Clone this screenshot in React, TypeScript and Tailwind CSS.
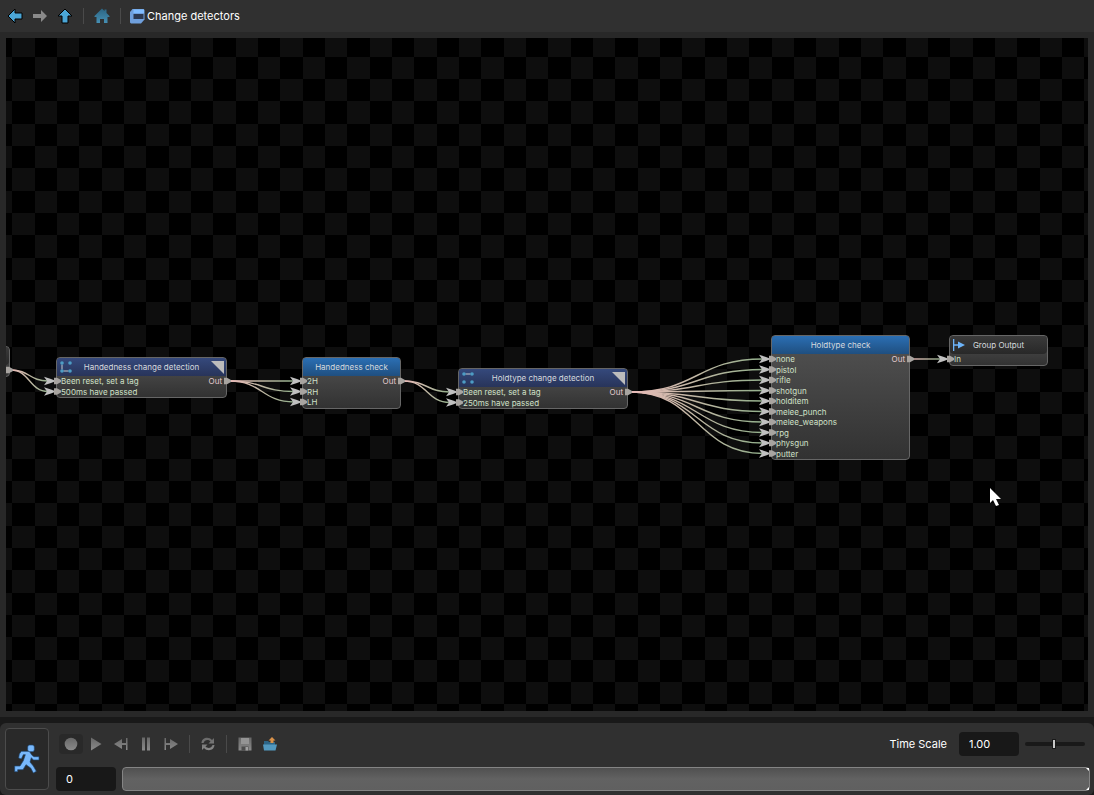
import type { ReactNode } from "react";

const ICON_BTN = "flex h-5 w-6 items-center justify-center rounded-sm";
const FIELD = "h-6 w-[60px] rounded bg-[#181818] px-2.5 text-[11px] text-white outline-none";

type NodeKind = "state" | "check" | "plain";

type GraphNode = {
  id: string;
  title: string;
  kind: NodeKind;
  x: number;
  y: number;
  w: number;
  inputs: string[];
  out: boolean;
  icon?: ReactNode;
};

const LinksIcon = ({ d }: { d: string }) => (
  <svg width="12" height="12" viewBox="0 0 12 12" fill="#4d9cc4">
    <path d={d} stroke="#c4ccd4" fill="none" />
    <circle cx="2" cy="2" r="1.8" />
    <circle cx="10" cy="2" r="1.8" />
    <circle cx="2" cy="10" r="1.8" />
    <circle cx="10" cy="10" r="1.8" />
  </svg>
);

const OutputIcon = () => (
  <svg width="12" height="12" viewBox="0 0 12 12" fill="#6db3f8">
    <path d="M0 0h1.3v12H0zM1 5.2h4v1.6H1z" />
    <path d="M5 2.5 12 6 5 9.5z" />
  </svg>
);

// positions are canvas-relative
const NODES: GraphNode[] = [
  { id: "prev", title: "", kind: "plain", x: -56, y: 308, w: 60, inputs: [""], out: false },
  {
    id: "hand", title: "Handedness change detection", kind: "state", x: 50, y: 319, w: 171, out: true,
    inputs: ["Been reset, set a tag", "500ms have passed"],
    icon: <LinksIcon d="M2 3.5v5M3.5 10h5" />,
  },
  { id: "handCheck", title: "Handedness check", kind: "check", x: 296, y: 319, w: 99, inputs: ["2H", "RH", "LH"], out: true },
  {
    id: "hold", title: "Holdtype change detection", kind: "state", x: 452, y: 330, w: 170, out: true,
    inputs: ["Been reset, set a tag", "250ms have passed"],
    icon: <LinksIcon d="M3.5 2h5" />,
  },
  {
    id: "holdCheck", title: "Holdtype check", kind: "check", x: 765, y: 297, w: 139, out: true,
    inputs: ["none", "pistol", "rifle", "shotgun", "holditem", "melee_punch", "melee_weapons", "rpg", "physgun", "putter"],
  },
  { id: "output", title: "Group Output", kind: "plain", x: 943, y: 297, w: 99, inputs: ["In"], out: false, icon: <OutputIcon /> },
];

const ROW = 10.5;
const portY = (n: GraphNode, i: number) => n.y + 24 + i * ROW;

const LINKS = [["hand", "handCheck"], ["handCheck", "hold"], ["hold", "holdCheck"], ["holdCheck", "output"]];

const byId = (id: string) => NODES.find((n) => n.id === id)!;

const EDGES = [
  ...byId("hand").inputs.map((_, i) => ({ x1: 5, y1: 332, x2: 42, y2: portY(byId("hand"), i) })),
  ...LINKS.flatMap(([from, to]) => {
    const a = byId(from);
    const b = byId(to);
    return b.inputs.map((_, i) => ({ x1: a.x + a.w + 3, y1: portY(a, 0), x2: b.x - 8, y2: portY(b, i) }));
  }),
];

const HEADER: Record<NodeKind, string> = {
  state: "bg-linear-to-b from-[#35497c] to-[#28345a]",
  check: "bg-linear-to-b from-[#2b6fb4] to-[#1f4f80]",
  plain: "rounded-b bg-linear-to-b from-[#3a3a3a] to-[#282828]",
};

function NodeBox({ node }: { node: GraphNode }) {
  return (
    <section
      className="absolute overflow-hidden rounded border border-[#666] bg-linear-to-b from-[#525252] to-[#323232] text-[8px] leading-[10px]"
      style={{ left: node.x, top: node.y, width: node.w }}
    >
      <header className={`relative flex h-[18px] items-center justify-center text-[#d6dade] ${HEADER[node.kind]}`}>
        {node.icon && <span className="absolute left-[3px]">{node.icon}</span>}
        {node.title}
        {node.kind === "state" && (
          <svg className="absolute top-[3px] right-0.5" width="13" height="13" viewBox="0 0 13 13">
            <path d="M0 0h13v13z" fill="#bcbcbc" />
          </svg>
        )}
      </header>
      <div className="flex justify-between">
        <ul className="pl-1 text-[#d0e0c8]">
          {node.inputs.map((name, i) => (
            <li key={i} className={i % 2 ? "h-2.5" : "h-[11px]"}>{name}</li>
          ))}
        </ul>
        {node.out && <span className="h-[11px] pr-1 text-[#e6ccd0]">Out</span>}
      </div>
    </section>
  );
}

function Port({ x, y }: { x: number; y: number }) {
  return <path transform={`translate(${x} ${y})`} d="M-3-3.300h3L4-1V1L0 3.300h-3z" fill="#a8a4a0" />;
}

function Canvas() {
  return (
    <main className="relative min-h-0 flex-1 overflow-hidden bg-black">
      <svg className="absolute inset-0 h-full w-full" shapeRendering="crispEdges">
        <defs>
          <pattern id="checker" x="6" y="19" width="134" height="134" patternUnits="userSpaceOnUse">
            <path
              fill="#0e0e0e"
              d="M23 0h22v22H23zM67 0h23v22H67zM112 0h22v22h-22zM0 22h23v22H0zM45 22h22v22H45zM90 22h22v22H90zM23 44h22v23H23zM67 44h23v23H67zM112 44h22v23h-22zM0 67h23v22H0zM45 67h22v22H45zM90 67h22v22H90zM23 89h22v22H23zM67 89h23v22H67zM112 89h22v22h-22zM0 111h23v23H0zM45 111h22v23H45zM90 111h22v23H90z"
            />
          </pattern>
        </defs>
        <rect width="100%" height="100%" fill="url(#checker)" />
      </svg>

      {NODES.map((n) => <NodeBox key={n.id} node={n} />)}

      <svg className="pointer-events-none absolute inset-0 h-full w-full" fill="none">
        {EDGES.map((e, i) => {
          const mid = (e.x2 - e.x1) / 2;
          return (
            <g key={i}>
              <linearGradient id={`edge${i}`} gradientUnits="userSpaceOnUse" x1={e.x1} x2={e.x2} y1="0" y2="0">
                <stop stopColor="#eabcb9" />
                <stop offset="1" stopColor="#93b08c" />
              </linearGradient>
              <path
                d={`M${e.x1} ${e.y1}C${e.x1 + mid} ${e.y1} ${e.x2 - mid} ${e.y2} ${e.x2} ${e.y2}`}
                stroke={`url(#edge${i})`}
                strokeWidth="1.4"
              />
              <path transform={`translate(${e.x2} ${e.y2})`} d="M-4-4.300 3-2 8 0 3 2-4 4.300-1 0z" fill="#c0c0c0" />
              <Port x={e.x2 + 9} y={e.y2} />
            </g>
          );
        })}
        <Port x={3} y={332} />
        {NODES.filter((n) => n.out).map((n) => <Port key={n.id} x={n.x + n.w} y={portY(n, 0)} />)}
        <path transform="translate(984 450)" d="M0 0v15l3-3 3 6 3-1-3-6h5z" fill="#fff" />
      </svg>
    </main>
  );
}

const ARROW = "M1 8 8 1v4h7v6H8v4z";

function Toolbar() {
  return (
    <nav className="flex h-8 shrink-0 items-center bg-[#303030] px-[7px]">
      <div className="flex gap-[9px]">
        <button aria-label="Back">
          <svg width="16" height="16" viewBox="0 0 16 16">
            <path d={ARROW} fill="#4ba6d6" stroke="#000" />
          </svg>
        </button>
        <button aria-label="Forward">
          <svg width="16" height="16" viewBox="0 0 16 16">
            <path d="M15 8 9 2v4H1v4h8v4z" fill="#8a8a8a" />
          </svg>
        </button>
        <button aria-label="Up">
          <svg width="16" height="16" viewBox="0 0 16 16">
            <path d={ARROW} fill="#4ba6d6" stroke="#000" transform="rotate(90 8 8)" />
          </svg>
        </button>
      </div>
      <span className="mx-2.5 h-4 w-px bg-[#4a4a4a]" />
      <button aria-label="Home">
        <svg width="16" height="16" viewBox="0 0 16 16">
          <linearGradient id="home" x2="0" y2="1">
            <stop stopColor="#2b6482" />
            <stop offset="1" stopColor="#4690b4" />
          </linearGradient>
          <path d="M8 .5 10.5 3V1.500h2V5L15.500 8v1h-2v6H10v-4H6v4H2.500V9h-2V8z" fill="url(#home)" />
        </svg>
      </button>
      <span className="mr-[9px] ml-2.5 h-4 w-px bg-[#4a4a4a]" />
      <a href="#" className="flex items-center gap-0.5 text-[11px] text-white">
        <svg width="15" height="15" viewBox="0 0 15 15">
          <path d="M2.500 0H13.500L14.500 1v9.500L11 14.500H1L0 13.500V3z" fill="#6f9fdc" />
          <path d="M3.500 .5h10.500V4H3.500z" fill="#80bcff" />
          <path d="M3.500 5H13.500V10H3.500z" fill="#2c3850" />
        </svg>
        Change detectors
      </a>
    </nav>
  );
}

function TransportIcon({ children }: { children: ReactNode }) {
  return (
    <svg width="14" height="14" viewBox="0 0 14 14" fill="url(#steel)">
      {children}
    </svg>
  );
}

function Timeline() {
  return (
    <footer className="flex shrink-0 gap-[7px] rounded-md bg-[#303030] pt-[5px] pr-1 pb-[5px] pl-[5px]">
      <svg className="absolute" width="0" height="0">
        <linearGradient id="steel" gradientUnits="userSpaceOnUse" x1="0" y1="0" x2="0" y2="14">
          <stop stopColor="#666" />
          <stop offset="1" stopColor="#8c8c8c" />
        </linearGradient>
      </svg>
      <button aria-label="Animation" className="flex h-[62px] w-11 items-center justify-center rounded border border-[#4c4c4c] bg-[#292929]">
        <svg width="26" height="30" viewBox="0 0 78 90" fill="#78b8fc" stroke="#1d4570" strokeWidth="2">
          <path d="M22 22H46L54 34 60 38H75V48H58L52 41 48 54 58 66 67 82 58 87 50 72 36 62 27 77H11V83H2V66H18L28 50 34 32H28L22 45 14 42 16 30z" />
          <rect x="41" y="3" width="20" height="20" rx="6" />
        </svg>
      </button>

      <div className="-mb-px flex min-w-0 flex-1 flex-col justify-between pt-1">
        <div className="flex items-center">
          <div className="flex items-center gap-px pl-[3px]">
            <button aria-label="Record" className={`${ICON_BTN} bg-[#292929]`}>
              <TransportIcon><circle cx="7" cy="7" r="6.300" /></TransportIcon>
            </button>
            <button aria-label="Play" className={ICON_BTN}>
              <TransportIcon><path d="M2 .5v13L12.500 7z" /></TransportIcon>
            </button>
            <button aria-label="Step back" className={ICON_BTN}>
              <TransportIcon><path d="M0 7l8-5v4h4V1h1.500v12H12V8H8v4z" /></TransportIcon>
            </button>
            <button aria-label="Pause" className={ICON_BTN}>
              <TransportIcon><path d="M3 .5h3v13H3zM8 .5h3v13H8z" /></TransportIcon>
            </button>
            <button aria-label="Step forward" className={ICON_BTN}>
              <TransportIcon><path d="M14 7 6 2v4H2V1H.5v12H2V8h4v4z" /></TransportIcon>
            </button>
            <span className="mx-[5px] h-[18px] w-px bg-[#4a4a4a]" />
            <button aria-label="Loop" className={ICON_BTN}>
              <TransportIcon>
                <path d="M.5 6C1 0 8-.5 11 3l2-2v5.500H7.500L9.500 4.500C7 2 3.500 3 2.500 6zM13.500 8C13 14 6 14.500 3 11l-2 2V7.500h5.500L4.500 9.500C7 12 10.500 11 11.500 8z" />
              </TransportIcon>
            </button>
            <span className="mx-[5px] h-[18px] w-px bg-[#4a4a4a]" />
            <button aria-label="Save" className={ICON_BTN}>
              <TransportIcon>
                <path d="M.5.5h13v13H.500z" />
                <path d="M3 1h8v6H3z" fill="#949494" />
                <path d="M3.500 9.500h7v4h-7z" fill="#4c4c4c" />
                <path d="M7.500 10H10v3.500H7.500z" fill="#a0a0a0" />
              </TransportIcon>
            </button>
            <button aria-label="Open" className={ICON_BTN}>
              <TransportIcon>
                <path d="M1 4h4l1 1h6v8H1z" fill="#2c6587" />
                <path d="M0 7.500h14L12.500 13.500H1z" fill="#5299c0" />
                <path d="M9 0l3.500 3.500H10.500V6h-3V3.500H5.500z" fill="#d9924a" />
              </TransportIcon>
            </button>
          </div>
          <div className="ml-auto flex items-center pr-[5px]">
            <label htmlFor="scale" className="mr-3 text-[11px] text-white">Time Scale</label>
            <input id="scale" className={FIELD} defaultValue="1.00" />
            <input
              type="range"
              aria-label="Time scale"
              min={0}
              max={2}
              step={0.01}
              defaultValue={0.96}
              className="ml-1.5 h-1 w-[60px] appearance-none rounded-full bg-[#191919] [&::-webkit-slider-thumb]:h-2.5 [&::-webkit-slider-thumb]:w-1 [&::-webkit-slider-thumb]:appearance-none [&::-webkit-slider-thumb]:border [&::-webkit-slider-thumb]:border-[#191919] [&::-webkit-slider-thumb]:bg-[#c8c8c8]"
            />
          </div>
        </div>
        <div className="flex gap-1.5">
          <input aria-label="Frame" className={FIELD} defaultValue="0" />
          <div className="relative h-6 flex-1 rounded-sm border border-[#848484] bg-linear-to-b from-[#505050] via-[#626262] to-[#606060]">
            <svg className="absolute top-0 right-0" width="3" height="22" viewBox="0 0 3 22" fill="#fff">
              <path d="M0 0h3v3zM3 19v3H0z" />
            </svg>
          </div>
        </div>
      </div>
    </footer>
  );
}

export default function App() {
  return (
    <div className="flex h-screen flex-col gap-1.5 overflow-hidden bg-[#191919] font-[Inter,sans-serif]">
      <div className="flex min-h-0 flex-1 flex-col bg-[#282828]">
        <Toolbar />
        <div className="flex min-h-0 flex-1 flex-col p-1.5">
          <Canvas />
        </div>
      </div>
      <Timeline />
    </div>
  );
}
